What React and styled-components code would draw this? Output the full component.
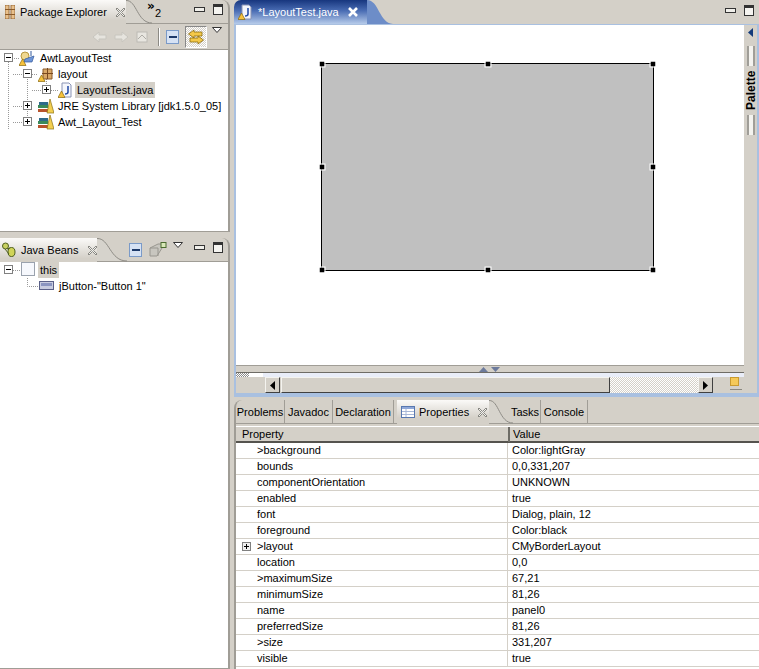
import React from "react";
import styled, { createGlobalStyle } from "styled-components";

const Global = createGlobalStyle`
  html, body { margin: 0; padding: 0; background: #d4d0c8; }
  body { font-family: "Liberation Sans", Arial, sans-serif; font-size: 11px; color: #000; }
  #root { width: 759px; height: 669px; overflow: hidden; }
  svg { flex: none; }
`;

const Page = styled.div`
  width: 759px; height: 669px; display: grid; grid-template-columns: 230px 525px; column-gap: 4px; overflow: hidden; background: #d4d0c8;
`;
const Column = styled.div`
  display: flex; flex-direction: column; min-width: 0; height: 669px; gap: ${p => p.$gap}px;
`;
const Pane = styled.section`
  display: flex; flex-direction: column; box-sizing: border-box; height: ${p => p.$h ? p.$h + "px" : "auto"}; flex: ${p => p.$h ? "none" : "1"};
  border: 1px solid #a09d96; border-width: 0 2px 1px 0; border-top-right-radius: 8px; overflow: hidden; background: #d4d0c8;
`;
const Header = styled.header`
  height: ${p => p.$h}px; flex: none; display: flex; align-items: center; position: relative; box-sizing: border-box;
  border-bottom: 1px solid #a09d96;
`;
const ViewTab = styled.div`
  height: calc(100% + 1px); align-self: flex-start; width: ${p => p.$w}px; flex: none; display: flex; align-items: center; box-sizing: border-box; padding-left: ${p => p.$pad}px;
  position: relative; background: linear-gradient(#fbfaf8, #d4d0c8 85%); white-space: nowrap;
`;
const TabName = styled.span`
  margin: 0 ${p => p.$r}px 0 ${p => p.$l}px;
`;
const Curve = styled.svg`
  position: absolute; left: 100%; top: 0; display: block;
`;
const Spacer = styled.div` flex: 1; `;
const HGap = styled.span` width: ${p => p.$w}px; flex: none; `;
const Chevron = styled.div`
  position: relative; width: 22px; height: 20px; margin-left: ${p => p.$ml}px;
  span { position: absolute; left: 0; top: -2px; width: 8px; overflow: hidden; font-family: "DejaVu Sans", sans-serif; font-size: 12px; font-weight: bold; line-height: 12px; }
  b { position: absolute; left: 8px; top: 5px; font-weight: normal; font-size: 11px; line-height: 12px; }
`;
const WinButtons = styled.div`
  display: flex; align-items: center; gap: 8px; padding-right: ${p => p.$r}px; margin-top: -4px;
`;
const MinBtn = styled.div`
  width: 9px; height: 3px; border: 1px solid #333; background: #f0efea;
`;
const MaxBtn = styled.div`
  width: 8px; height: 7px; border: 1px solid #333; border-top-width: 3px; background: #f5f4f0;
`;
const ToolRow = styled.div`
  height: 26px; flex: none; display: flex; align-items: center; justify-content: flex-end; gap: 5px; padding-right: 5px; box-sizing: border-box; border-bottom: 1px solid #a09d96;
`;
const ToolSep = styled.div`
  width: 1px; height: 18px; background: #8c8a84; margin: 0 2px 0 3px; box-shadow: 1px 0 #fff;
`;
const ToggleBox = styled.div`
  width: 22px; height: 22px; box-sizing: border-box; border: 1px solid; border-color: #888 #fff #fff #888;
  display: flex; align-items: center; justify-content: center;
  background: repeating-conic-gradient(#fff 0 25%, #d4d0c8 0 50%) 0 0 / 2px 2px;
`;
const TreeArea = styled.div`
  flex: 1; background: #fff; position: relative; overflow: hidden;
`;
const Guides = styled.svg`
  position: absolute; left: 0; top: 0; display: block;
`;
const Row = styled.div`
  height: 16px; position: relative; display: flex; align-items: center; white-space: nowrap; padding-left: ${p => p.$x}px;
`;
const Expander = styled.div`
  position: absolute; left: ${p => p.$x}px; top: 3px; width: 7px; height: 7px; border: 1px solid #808080; background: #fff;
  &::before { content: ""; position: absolute; left: 1px; right: 1px; top: 3px; height: 1px; background: #000; }
  &::after { content: ""; display: ${p => p.$open ? "none" : "block"}; position: absolute; top: 1px; bottom: 1px; left: 3px; width: 1px; background: #000; }
`;
const IconSlot = styled.div`
  position: absolute; left: ${p => p.$x}px; top: 0; width: 16px; height: 16px;
  svg { display: block; }
`;
const Label = styled.span`
  padding: 0 ${p => p.$sel ? 2 : 0}px; height: 16px; line-height: 16px; background: ${p => p.$sel ? "#d4d0c8" : "transparent"}; margin-left: ${p => p.$sel ? -2 : 0}px;
`;
const MenuSvg = styled.svg`
  display: block; margin: 0 ${p => p.$mr || 0}px ${p => p.$mb}px 0;
`;

/* editor */
const EditorPane = styled.section`
  height: 397px; flex: none; display: flex; flex-direction: column; background: #d4d0c8;
`;
const EditorHeader = styled.header`
  height: 24px; flex: none; display: flex; align-items: center; background: #d4d0c8;
`;
const EditorTab = styled.div`
  width: 133px; height: 100%; position: relative; flex: none; box-sizing: border-box; display: flex; align-items: center; padding-left: 4px; gap: 4px;
  background: linear-gradient(#17367e 0, #4a6db4 45%, #b6cbea 100%); color: #fff; border-top-left-radius: 7px;
`;
const CloseX = styled.svg` margin-left: 5px; display: block; `;
const EditorMain = styled.div`
  flex: 1; display: flex; min-height: 0; border: 2px solid #a9c0e0; border-width: 1px 2px 4px 2px; 
`;
const DesignColumn = styled.div`
  width: 508px; flex: none; display: flex; flex-direction: column; background: #fff;
`;
const Canvas = styled.div`
  height: 340px; flex: none; box-sizing: border-box; padding: 38px 0 0 85px; background: #fff;
`;
const Widget = styled.div`
  width: 333px; height: 208px; box-sizing: border-box; border: 1px solid #000; background: #c0c0c0; position: relative;
`;
const Handle = styled.i`
  position: absolute; width: 5px; height: 5px; background: #000; left: ${p => p.$x}; top: ${p => p.$y}; transform: translate(-50%, -50%); outline: 1px solid #fff;
`;
const Sash = styled.div`
  height: 8px; flex: none; box-sizing: border-box; background: #d4d0c8; border-top: 1px solid #a09d96; border-bottom: 1px solid #6e6c66; display: flex; justify-content: center; align-items: center; gap: 3px; padding-right: 1px;
`;
const LowerBar = styled.div`
  flex: 1; min-height: 0; display: flex; flex-direction: column; background: #d4d0c8; position: relative;
`;
const ThinStrip = styled.div`
  height: 4px; flex: none; display: flex; background: #e9edf8;
`;
const DitherGrip = styled.div`
  width: 13px; height: 4px; background: repeating-conic-gradient(#fff 0 25%, #8a8a8a 0 50%) 0 0 / 2px 2px;
`;
const WhiteGrip = styled.div` width: 14px; height: 4px; background: #fff; `;
const ScrollRow = styled.div`
  height: 16px; flex: none; display: flex; padding-left: 29px; box-sizing: border-box;
`;
const ScrollBtn = styled.div`
  width: 15px; flex: none; box-sizing: border-box; background: #d4d0c8; border: 1px solid; border-color: #f4f3ef #404040 #404040 #f4f3ef; display: flex; align-items: center; justify-content: center;
`;
const Thumb = styled.div`
  width: 329px; margin-left: 1px; flex: none; box-sizing: border-box; background: #d4d0c8; border: 1px solid; border-color: #f4f3ef #404040 #404040 #f4f3ef;
`;
const Track = styled.div`
  flex: 1; background: repeating-conic-gradient(#fff 0 25%, #d4d0c8 0 50%) 0 0 / 2px 2px;
`;
const OverviewBox = styled.div`
  width: 31px; flex: none; display: flex; flex-direction: column; align-items: flex-end; gap: 3px; padding-right: 2px; box-sizing: border-box;
`;
const Yellow = styled.div`
  width: 7px; height: 7px; margin-right: 3px; background: #f5c958; border: 1px solid #c89a30;
`;
const OverviewLine = styled.div` width: 12px; height: 1px; background: #8a8880; `;
const Palette = styled.aside`
  flex: 1; background: #d4d0c8; display: flex; flex-direction: column; align-items: center; padding-top: 3px; box-sizing: border-box; position: relative;
`;
const VGap = styled.span` height: ${p => p.$h}px; flex: none; `;
const GripLines = styled.div`
  width: 8px; height: ${p => p.$h}px; flex: none; box-sizing: border-box; border-left: 2px solid #a09e98; border-right: 2px solid #a09e98; background: #f4f3ef;
`;
const PaletteText = styled.div`
  writing-mode: vertical-rl; transform: rotate(180deg); font-weight: bold; font-size: 12px; height: 41px; line-height: 12px; text-align: center; margin: 4px 0;
`;

/* properties */
const PropPane = styled.section`
  flex: 1; min-height: 0; display: flex; flex-direction: column; background: #d4d0c8; border-left: 2px solid #a09d96; border-top-left-radius: 8px; overflow: hidden;
`;
const PropTabs = styled.nav`
  height: 24px; flex: none; display: flex; align-items: stretch; box-sizing: border-box; border-bottom: 1px solid #a09d96;
`;
const FlatTab = styled.div`
  display: flex; align-items: center; justify-content: center; width: ${p => p.$w}px; flex: none; box-sizing: border-box; border-right: 1px solid #a09d96;
`;
const ActiveTab = styled.div`
  width: 92px; margin-left: 3px; height: 24px; flex: none; display: flex; align-items: center; padding-left: 4px; box-sizing: border-box; position: relative;
  background: linear-gradient(#fbfaf8, #d4d0c8 75%);
`;
const GapTab = styled.div` width: 21px; flex: none; `;
const TableHead = styled.div`
  height: 17px; flex: none; display: grid; grid-template-columns: 272px 1fr; box-sizing: border-box; border-top: 1px solid #fff; border-bottom: 2px solid #55534e; margin-top: 2px;
`;
const HeadCell = styled.div`
  padding-left: 6px; line-height: 15px; box-sizing: border-box;
  & + & { border-left: 2px solid #6e6c66; padding-left: 3px; }
`;
const TableBody = styled.div` flex: 1; background: #fff; `;
const PropRow = styled.div`
  height: 16px; box-sizing: border-box; display: grid; grid-template-columns: 272px 1fr; border-bottom: 1px solid #d4d0c8; position: relative;
`;
const PropName = styled.div`
  padding-left: 21px; line-height: 15px; border-right: 1px solid #d4d0c8;
`;
const PropValue = styled.div`
  padding-left: 4px; line-height: 15px;
`;
const PropExpander = styled.div`
  position: absolute; left: 6px; top: 3px; width: 7px; height: 7px; border: 1px solid #808080; background: #eee;
  &::before { content: ""; position: absolute; left: 1px; right: 1px; top: 3px; height: 1px; background: #000; }
  &::after { content: ""; position: absolute; top: 1px; bottom: 1px; left: 3px; width: 1px; background: #000; }
`;

const Warn = () => (<path d="M3.5 9 L7 15.5 H0 Z" fill="#f6c23c" stroke="#8a6a10" strokeWidth=".7" />);

const PackageIcon = () => (
  <svg width="10" height="14" viewBox="0 0 10 14"><rect x="0" y="0" width="4" height="14" fill="#e8c08c" stroke="#8a5a2a" strokeWidth=".8"/><rect x="6" y="0" width="4" height="14" fill="#e8c08c" stroke="#8a5a2a" strokeWidth=".8"/><path d="M0 4.5h10M0 9.5h10" stroke="#8a5a2a"/></svg>
);
const ProjectIcon = () => (
  <svg width="16" height="16" viewBox="0 0 16 16"><circle cx="6" cy="6" r="4" fill="#f0d890" stroke="#b89840"/><path d="M6 9 L15 6 L13 12 H5Z" fill="#6e96d8" stroke="#355a9c" strokeWidth=".7"/><path d="M12 1v5" stroke="#355a9c"/><Warn/></svg>
);
const PkgFolderIcon = () => (
  <svg width="16" height="16" viewBox="0 0 16 16"><path d="M5 3h9v10H5z" fill="#d9a868" stroke="#8a5a2a" /><path d="M9.5 2v11M4 7.5h11" stroke="#7a4a20"/><Warn/></svg>
);
const JavaIcon = ({ warn = true }) => (
  <svg width="16" height="16" viewBox="0 0 16 16"><path d="M4 1h7l2 2v12H4z" fill="#f4f6fc" stroke="#8a94b4" /><path d="M10 4v6q0 2-3 2" fill="none" stroke="#2850a8" strokeWidth="1.6"/>{warn && <Warn/>}</svg>
);
const LibIcon = () => (
  <svg width="16" height="16" viewBox="0 0 16 16"><rect x="0" y="11" width="10" height="3" fill="#b8542c"/><rect x="0" y="7" width="10" height="3" fill="#3a8a5a"/><rect x="1" y="4" width="9" height="3" fill="#2e6a8a"/><path d="M12 1 L16 15 H9Z" fill="#f3cf50" stroke="#8a7014" strokeWidth=".7"/></svg>
);
const BeansIcon = () => (
  <svg width="14" height="16" viewBox="0 0 14 16"><ellipse cx="3.5" cy="4" rx="3" ry="3" fill="#c8d060" stroke="#50601f"/><ellipse cx="9.5" cy="10" rx="3.5" ry="4.5" fill="#d0d458" stroke="#50601f"/><path d="M5 7 L8 6 M3 7 L7 12" stroke="#50601f"/></svg>
);
const ThisIcon = () => (
  <svg width="15" height="15" viewBox="0 0 15 15"><rect x=".5" y=".5" width="13" height="13" fill="#f6f8fd" stroke="#9aa2ae"/></svg>
);
const ButtonIcon = () => (
  <svg width="16" height="16" viewBox="0 0 16 16"><rect x=".5" y="3.5" width="14" height="8" fill="#c8cce0" stroke="#5a6088"/><rect x="2" y="5" width="11" height="3" fill="#8a94c0"/></svg>
);
const XIcon = () => (
  <svg width="11" height="11" viewBox="0 0 11 11" fill="#f4f3ef" stroke="#7e7e78" strokeWidth=".9"><path d="M2 1 L5.5 4.5 L9 1 L10 2 L6.5 5.5 L10 9 L9 10 L5.5 6.5 L2 10 L1 9 L4.5 5.5 L1 2Z"/></svg>
);
const TableIcon = () => (
  <svg width="15" height="14" viewBox="0 0 15 14"><rect x=".5" y="1.5" width="13" height="11" fill="#fff" stroke="#5878b0"/><rect x="1" y="2" width="12" height="2" fill="#90a8d8"/><path d="M1 6.5h12M1 9.5h12M5 4v8" stroke="#a8b8d8"/></svg>
);
const ArrowIcon = ({ flip }) => (
  <svg width="17" height="14" viewBox="0 0 17 14" style={flip ? { transform: "scaleX(-1)" } : undefined}><path d="M2 7 L8 2 V5 H15 V9 H8 V12Z" fill="#e6e4de" stroke="#c8c6bf"/></svg>
);
const NavHomeIcon = () => (
  <svg width="15" height="14" viewBox="0 0 15 14"><rect x="2" y="2" width="10" height="10" fill="#e8e6e0" stroke="#bcbab4"/><path d="M3 9 L7 5 L11 9" stroke="#aeaca6" fill="none"/></svg>
);
const CollapseIcon = () => (
  <svg width="14" height="16" viewBox="0 0 14 16"><rect x=".5" y="1.5" width="12" height="13" fill="#d6e2f4" stroke="#7a9ac8"/><rect x="3" y="7" width="8" height="2" fill="#1e3a6a"/></svg>
);
const LinkIcon = () => (
  <svg width="18" height="18" viewBox="0 0 18 18"><path d="M7 2 L1.5 6 L7 10 V8 H15 V4 H7Z" fill="#f4c848" stroke="#8a6c10" strokeWidth=".8"/><path d="M11 8 L16.5 12 L11 16 V14 H3 V10 H11Z" fill="#f4c848" stroke="#8a6c10" strokeWidth=".8"/></svg>
);
const MenuArrow = ({ mb, mr }) => (
  <MenuSvg $mb={mb} $mr={mr} width="11" height="7" viewBox="0 0 11 7"><path d="M.5 .5 H9.5 L5 5.5Z" fill="#fff" stroke="#333"/></MenuSvg>
);
const NewPaneIcon = () => (
  <svg width="18" height="16" viewBox="0 0 18 16"><path d="M1 6 L9 2 H13 V6 L8 14 H1Z" fill="#c8c6bf" stroke="#98968f"/><path d="M1 6h8v8" fill="none" stroke="#98968f"/><rect x="12" y="0.5" width="5" height="5" fill="#d8e8b8" stroke="#4a6a30"/></svg>
);
const TabCurve = ({ w = 28, h = 24 }) => (
  <Curve width={w} height={h} viewBox={`0 0 ${w} ${h}`}>
    <path d={`M0 0 C${w * .42} 0 ${w * .42} ${h - 1} ${w} ${h - 1} H0Z`} fill="#d6d3cc" />
    <path d={`M0 .5 C${w * .42} 0 ${w * .42} ${h - 1} ${w} ${h - 1}`} fill="none" stroke="#8e8c86" />
  </Curve>
);

const Tri = ({ d, fill = "#000", w = 5, h = 9 }) => (
  <svg width={w} height={h} viewBox={`0 0 ${w} ${h}`} style={{ display: "block" }}><path d={d} fill={fill} /></svg>
);

const handles = [["0", "0"], ["50%", "0"], ["100%", "0"], ["0", "50%"], ["100%", "50%"], ["0", "100%"], ["50%", "100%"], ["100%", "100%"]];

const properties = [
  [">background", "Color:lightGray"], ["bounds", "0,0,331,207"], ["componentOrientation", "UNKNOWN"], ["enabled", "true"],
  ["font", "Dialog, plain, 12"], ["foreground", "Color:black"], [">layout", "CMyBorderLayout", true], ["location", "0,0"],
  [">maximumSize", "67,21"], ["minimumSize", "81,26"], ["name", "panel0"], ["preferredSize", "81,26"], [">size", "331,207"], ["visible", "true"],
];

export default function App() {
  return (
    <Page>
      <Global />
      <Column $gap={6}>
        <Pane $h={232}>
          <Header $h={24}>
            <ViewTab $w={126} $pad={5}>
              <PackageIcon />
              <TabName $l={5} $r={8}>Package Explorer</TabName>
              <XIcon />
              <TabCurve w={26} />
            </ViewTab>
            <Chevron $ml={21}><span>»</span><b>2</b></Chevron>
            <Spacer />
            <WinButtons $r={5}><MinBtn /><MaxBtn /></WinButtons>
          </Header>
          <ToolRow>
            <ArrowIcon /><ArrowIcon flip /><NavHomeIcon /><ToolSep /><CollapseIcon /><ToggleBox><LinkIcon /></ToggleBox><MenuArrow mb={12} />
          </ToolRow>
          <TreeArea>
            <Guides width="60" height="100" viewBox="0 0 60 100">
              <path d="M8.5 13V8M12 8.5h7M8.5 8v72M13 24.5h11M13 56.5h11M13 72.5h11M27.5 29V72M32 24.5h6M46.5 29v12M32 40.5h11M51 40.5h7" fill="none" stroke="#999" strokeDasharray="1 1" />
            </Guides>
            <Row $x={40}><Expander $x={4} $open /><IconSlot $x={19}><ProjectIcon /></IconSlot><Label>AwtLayoutTest</Label></Row>
            <Row $x={58}><Expander $x={23} $open /><IconSlot $x={38}><PkgFolderIcon /></IconSlot><Label>layout</Label></Row>
            <Row $x={77}><Expander $x={42} /><IconSlot $x={58}><JavaIcon /></IconSlot><Label $sel>LayoutTest.java</Label></Row>
            <Row $x={58}><Expander $x={23} /><IconSlot $x={38}><LibIcon /></IconSlot><Label>JRE System Library [jdk1.5.0_05]</Label></Row>
            <Row $x={58}><Expander $x={23} /><IconSlot $x={38}><LibIcon /></IconSlot><Label>Awt_Layout_Test</Label></Row>
          </TreeArea>
        </Pane>
        <Pane>
          <Header $h={24}>
            <ViewTab $w={97} $pad={2}>
              <BeansIcon />
              <TabName $l={5} $r={9}>Java Beans</TabName>
              <XIcon />
              <TabCurve w={30} />
            </ViewTab>
            <Spacer />
            <CollapseIcon />
            <HGap $w={6} />
            <NewPaneIcon />
            <HGap $w={6} />
            <MenuArrow mb={8} />
            <HGap $w={10} />
            <WinButtons $r={5}><MinBtn /><MaxBtn /></WinButtons>
          </Header>
          <TreeArea>
            <Guides width="60" height="40" viewBox="0 0 60 40">
              <path d="M13 8.5h7M27.5 16v8.5H39" fill="none" stroke="#999" strokeDasharray="1 1" />
            </Guides>
            <Row $x={40}><Expander $x={4} $open /><IconSlot $x={21}><ThisIcon /></IconSlot><Label $sel>this</Label></Row>
            <Row $x={59}><IconSlot $x={39}><ButtonIcon /></IconSlot><Label>jButton-"Button 1"</Label></Row>
          </TreeArea>
        </Pane>
      </Column>
      <Column $gap={3}>
        <EditorPane>
          <EditorHeader>
            <EditorTab>
              <JavaIcon /> *LayoutTest.java
              <CloseX width="10" height="10" viewBox="0 0 10 10"><path d="M1 1 L9 9 M9 1 L1 9" stroke="#fff" strokeWidth="2.6" /></CloseX>
              <Curve width="26" height="24" viewBox="0 0 26 24"><path d="M0 0 C12 0 12 23 26 24 H0Z" fill="#6d8dc8" /></Curve>
            </EditorTab>
            <Spacer />
            <WinButtons $r={5}><MinBtn /><MaxBtn /></WinButtons>
          </EditorHeader>
          <EditorMain>
            <DesignColumn>
              <Canvas>
                <Widget>
                  {handles.map(([x, y]) => <Handle key={x + y} $x={x} $y={y} />)}
                </Widget>
              </Canvas>
              <Sash>
                <Tri w={9} h={5} d="M4.5 0 L9 5 H0Z" fill="#6c7a9c" />
                <Tri w={9} h={5} d="M0 0 H9 L4.5 5Z" fill="#6c7a9c" />
              </Sash>
              <LowerBar>
                <ThinStrip><DitherGrip /><WhiteGrip /></ThinStrip>
                <ScrollRow>
                  <ScrollBtn><Tri d="M5 0 V9 L0 4.5Z" /></ScrollBtn>
                  <Thumb />
                  <Track />
                  <ScrollBtn><Tri d="M0 0 V9 L5 4.5Z" /></ScrollBtn>
                  <OverviewBox><Yellow /><OverviewLine /></OverviewBox>
                </ScrollRow>
              </LowerBar>
            </DesignColumn>
            <Palette>
              <Tri d="M5 0 V9 L0 4.5Z" fill="#123a7a" />
              <VGap $h={9} />
              <GripLines $h={20} />
              <PaletteText>Palette</PaletteText>
              <GripLines $h={20} />
            </Palette>
          </EditorMain>
        </EditorPane>
        <PropPane>
          <PropTabs>
            <FlatTab $w={49}>Problems</FlatTab>
            <FlatTab $w={48}>Javadoc</FlatTab>
            <FlatTab $w={61}>Declaration</FlatTab>
            <ActiveTab>
              <TableIcon />
              <TabName $l={3} $r={8}>Properties</TabName>
              <XIcon />
              <TabCurve w={24} />
            </ActiveTab>
            <GapTab />
            <FlatTab $w={31}>Tasks</FlatTab>
            <FlatTab $w={47}>Console</FlatTab>
          </PropTabs>
          <TableHead>
            <HeadCell>Property</HeadCell>
            <HeadCell>Value</HeadCell>
          </TableHead>
          <TableBody>
            {properties.map(([n, v, exp]) => (
              <PropRow key={n}>
                {exp && <PropExpander />}
                <PropName>{n}</PropName>
                <PropValue>{v}</PropValue>
              </PropRow>
            ))}
          </TableBody>
        </PropPane>
      </Column>
    </Page>
  );
}
